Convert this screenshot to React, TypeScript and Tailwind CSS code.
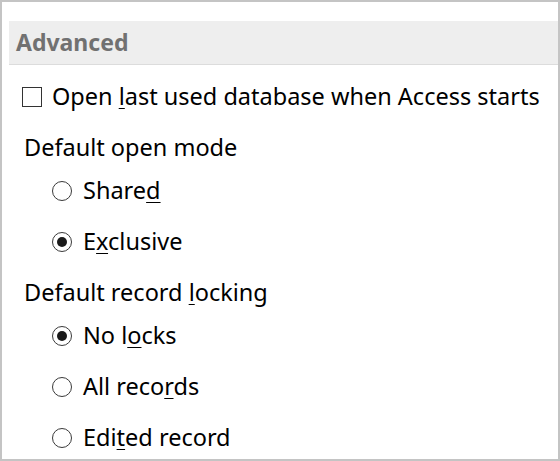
const font = { fontFamily: '"Noto Sans", "Open Sans", sans-serif' };

function Key({ children }: { children: string }) {
  return <span className="underline decoration-1 underline-offset-[3px]">{children}</span>;
}

function Radio({ checked }: { checked?: boolean }) {
  return (
    <span className="flex h-[20px] w-[20px] shrink-0 items-center justify-center rounded-full border border-[#3a3a3a] bg-white">
      {checked && <span className="h-[10px] w-[10px] rounded-full bg-[#1a1a1a]" />}
    </span>
  );
}

function RadioRow({ checked, children }: { checked?: boolean; children: React.ReactNode }) {
  return (
    <div className="flex h-[51px] items-center gap-[11px] pl-[50px]">
      <Radio checked={checked} />
      <span>{children}</span>
    </div>
  );
}

export default function App() {
  return (
    <div
      className="h-[461px] w-[560px] overflow-hidden border-2 border-[#c4c4c4] bg-white text-[23.5px] leading-none text-black"
      style={font}
    >
      <div className="pt-[19px] pl-[7px]">
        <div className="flex h-[44px] items-center border-b border-[#dcdcdc] bg-[#eeeeee] pl-[7px] pb-[1px] text-[23px] font-bold text-[#717171]">
          Advanced
        </div>
      </div>

      <div className="flex h-[64px] items-center gap-[10px] pl-[20px]">
        <span className="h-[20px] w-[20px] shrink-0 border border-[#333] bg-white" />
        <span>
          Open <Key>l</Key>ast used database when Access starts
        </span>
      </div>

      <div className="flex h-[36px] items-center pl-[22px] pt-[2px]">
        <span>Default open mode</span>
      </div>
      <RadioRow>
        Share<Key>d</Key>
      </RadioRow>
      <RadioRow checked>
        E<Key>x</Key>clusive
      </RadioRow>

      <div className="flex h-[43px] items-center pl-[22px] pt-[9px]">
        <span>
          Default record <Key>l</Key>ocking
        </span>
      </div>
      <RadioRow checked>
        No l<Key>o</Key>cks
      </RadioRow>
      <RadioRow>
        All reco<Key>r</Key>ds
      </RadioRow>
      <RadioRow>
        Edi<Key>t</Key>ed record
      </RadioRow>
    </div>
  );
}
